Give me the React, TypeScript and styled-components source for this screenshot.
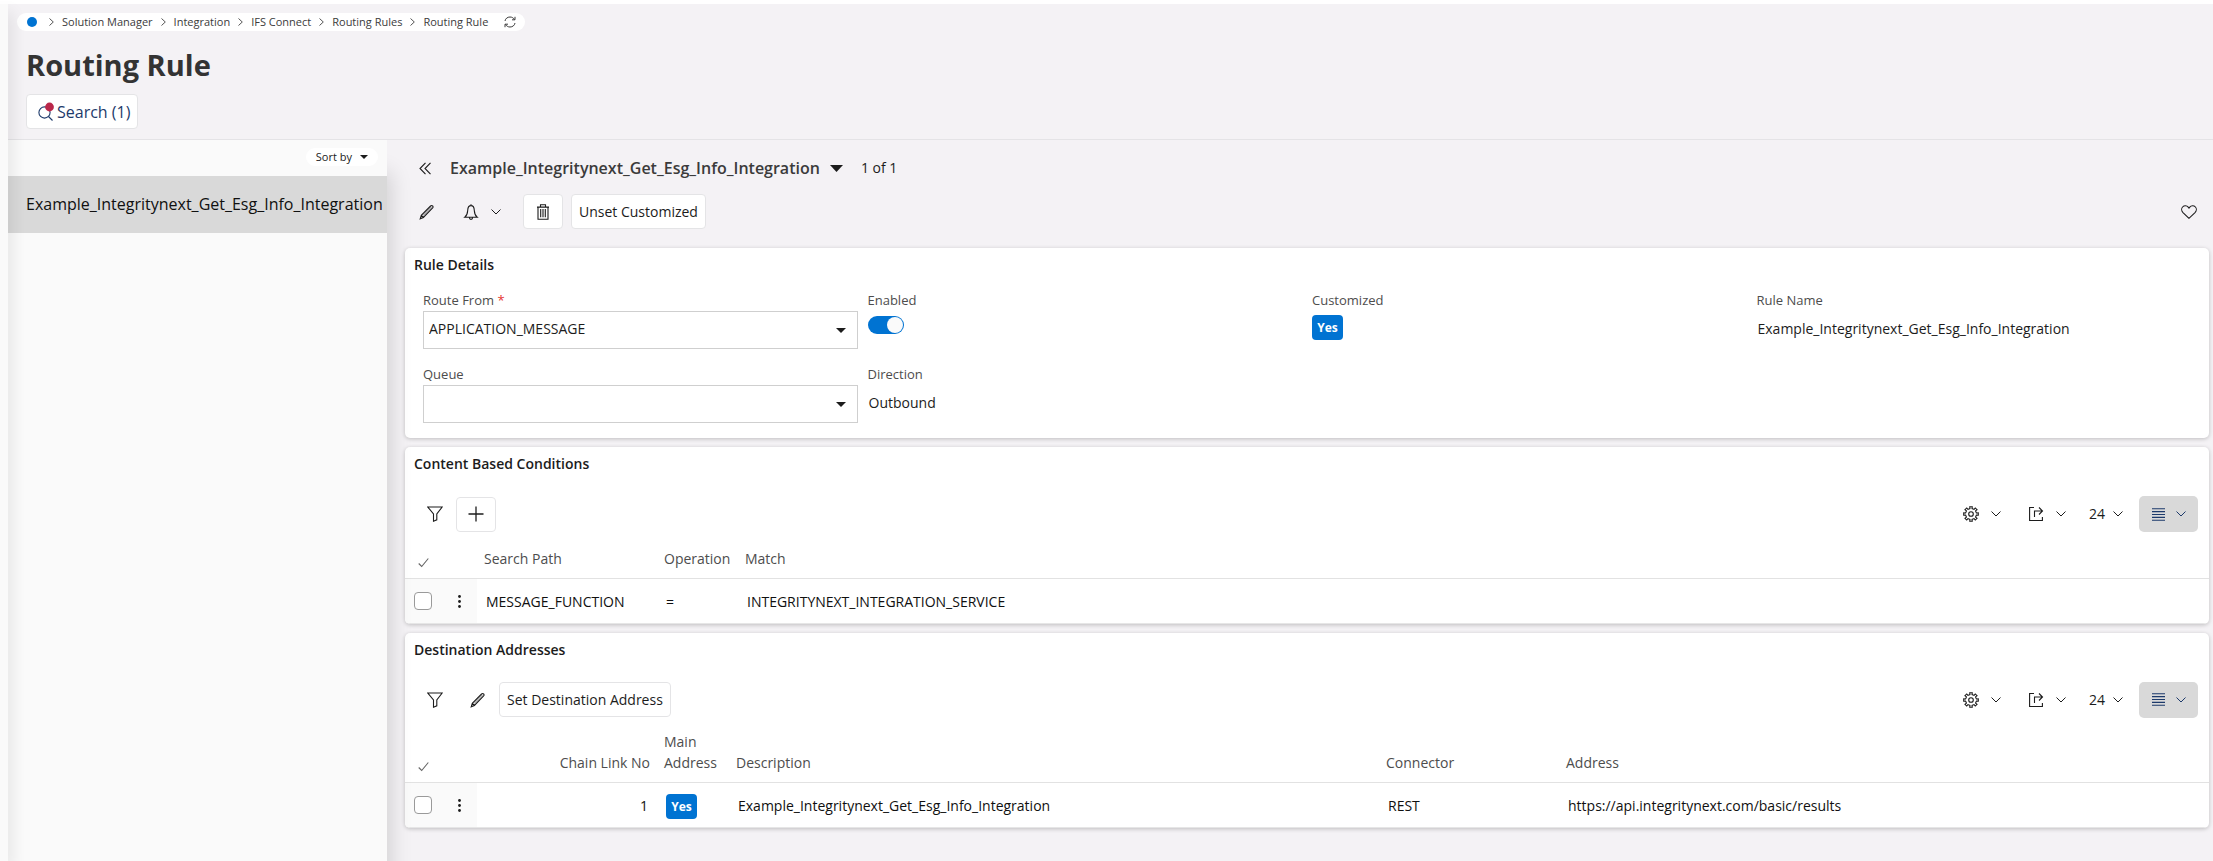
import React from "react";
import styled, { createGlobalStyle, css } from "styled-components";

const GlobalStyle = createGlobalStyle`
  *, *::before, *::after { box-sizing: border-box; }
  body {
    margin: 0;
    background: #ffffff;
    color: #1c1c1c;
    font-family: "Open Sans", "Noto Sans", sans-serif;
    font-size: 14px;
    line-height: 20px;
  }
  h1, h2, h3, p { margin: 0; }
  button, select, input { font: inherit; color: inherit; }
  button { cursor: pointer; }
  svg { display: block; flex: none; }
`;

/* ---------- shell ---------- */

const Shell = styled.div`
  display: flex;
  min-height: 100vh;
  padding-top: 4px;
`;

const Rail = styled.div`
  position: relative;
  z-index: 2;
  flex: none;
  width: 8px;
  background: #fafafa;
  box-shadow: 2px 8px 16px rgba(0, 0, 0, 0.14);
`;

const Main = styled.main`
  flex: 1;
  min-width: 0;
  display: flex;
  flex-direction: column;
  background: #f4f2f5;
`;

const PageHeader = styled.header`
  display: flex;
  flex-direction: column;
  align-items: flex-start;
  padding: 9px 9px 10px;
  border-bottom: 1px solid #e4e3e6;
`;

const Breadcrumbs = styled.nav`
  display: flex;
  align-items: center;
  height: 18px;
  padding: 0 9px 0 10px;
  border-radius: 9px;
  background: #ffffff;
  color: #3b3b3b;
  font-size: 11px;
  line-height: 18px;
`;

const HomeDot = styled.a`
  width: 10px;
  height: 10px;
  margin-right: 12px;
  border-radius: 50%;
  background: #0073d2;
`;

const Crumb = styled.a`
  margin: 0 8px;
  color: inherit;
  text-decoration: none;
`;

const BareButton = styled.button`
  display: flex;
  align-items: center;
  gap: 12px;
  padding: 0;
  border: 0;
  background: none;
`;

const RefreshButton = styled(BareButton)`
  margin-left: 8px;
`;

const PageTitle = styled.h1`
  margin: 14px 9px 9px;
  color: #333333;
  font-size: 29px;
  line-height: 40px;
  font-weight: 700;
`;

const Button = styled.button<{ $square?: boolean }>`
  display: flex;
  align-items: center;
  justify-content: center;
  height: 35px;
  padding: 0 7px;
  border: 1px solid #e4e4e6;
  border-radius: 4px;
  background: #ffffff;
  white-space: nowrap;
  ${(p) => p.$square && css`width: 40px; padding: 0;`}
`;

const SearchButton = styled(Button)`
  gap: 2px;
  margin-left: 9px;
  padding: 0 7px 0 11px;
  color: #1d3a6b;
  font-size: 16px;
`;

const Body = styled.div`
  flex: 1;
  display: flex;
`;

/* ---------- record list ---------- */

const ListPanel = styled.aside`
  position: relative;
  z-index: 1;
  flex: none;
  display: flex;
  flex-direction: column;
  width: 379px;
  background: #fafafa;
  clip-path: inset(0 -32px 0 0);
  box-shadow: 4px 32px 20px rgba(0, 0, 0, 0.14);
`;

const SortButton = styled.button`
  display: flex;
  align-items: center;
  gap: 8px;
  align-self: flex-end;
  height: 18px;
  margin: 8px 9px 10px;
  padding: 0 10px;
  border: 0;
  border-radius: 9px;
  background: #ffffff;
  font-size: 11px;
  line-height: 18px;
`;

const RecordLink = styled.a`
  padding: 16px 0 17px 18px;
  background: #d9d9d9;
  color: #101010;
  font-size: 16px;
  line-height: 24px;
  text-decoration: none;
  white-space: nowrap;
`;

/* ---------- record detail ---------- */

const Detail = styled.section`
  flex: 1;
  min-width: 0;
  display: flex;
  flex-direction: column;
  padding: 16px 4px 16px 18px;
`;

const RecordBar = styled.div`
  display: flex;
  align-items: center;
  gap: 10px;
  height: 24px;
  padding-left: 14px;
`;

const RecordTitle = styled.h2`
  margin-left: 8px;
  color: #3b3b3b;
  font-size: 16px;
  line-height: 24px;
  font-weight: 600;
`;

const RecordCount = styled.span`
  margin-left: 8px;
`;

const CommandBar = styled.div`
  display: flex;
  align-items: center;
  gap: 8px;
  margin: 14px 0 19px;
  padding: 0 12px 0 14px;
`;

const CommandGroup = styled.div`
  display: flex;
  align-items: center;
  gap: 28px;
  margin-right: 14px;
`;

const Spacer = styled.div`
  flex: 1;
`;

const Card = styled.section`
  margin-bottom: 9px;
  border-radius: 5px;
  background: #ffffff;
  box-shadow: 0 1px 4px rgba(0, 0, 0, 0.22);
  overflow: hidden;
`;

const CardTitle = styled.h3`
  padding: 7px 9px;
  color: #1c1c1c;
  font-size: 14px;
  line-height: 20px;
  font-weight: 600;
`;

const FormGrid = styled.div`
  display: grid;
  grid-template-columns: repeat(4, 1fr);
  column-gap: 10px;
  padding: 8px 18px 15px;
`;

const Field = styled.div`
  display: flex;
  flex-direction: column;
  align-items: flex-start;
  height: 74px;
  &:nth-child(n + 5) { height: 59px; }
`;

const Label = styled.label`
  margin-bottom: 1px;
  color: #4d4d4d;
  font-size: 13px;
  line-height: 20px;
`;

const Required = styled.span`
  color: #e5342f;
`;

const Value = styled.output`
  padding: 8px 1px;
`;

const SelectBox = styled.div`
  display: grid;
  align-items: center;
  width: 100%;
  & > * { grid-area: 1 / 1; }
  & > svg { justify-self: end; margin-right: 12px; pointer-events: none; }
`;

const Select = styled.select`
  appearance: none;
  width: 100%;
  height: 38px;
  padding: 0 32px 2px 5px;
  border: 1px solid #cfcfcf;
  border-radius: 0;
  background: #ffffff;
`;

const Toggle = styled.input`
  appearance: none;
  display: flex;
  justify-content: flex-end;
  width: 36px;
  height: 18px;
  margin: 5px 0 0;
  padding: 1px;
  border-radius: 9px;
  background: #0073d2;
  &::before {
    content: "";
    width: 16px;
    height: 16px;
    border-radius: 50%;
    background: #fafafa;
  }
`;

const Badge = styled.span`
  display: inline-block;
  width: 31px;
  border-radius: 4px;
  background: #0073d2;
  color: #ffffff;
  font-size: 12px;
  line-height: 25px;
  font-weight: 700;
  text-align: center;
  vertical-align: middle;
`;

const BadgeSlot = styled.div`
  padding-top: 4px;
`;

/* ---------- tables ---------- */

const TableBar = styled.div`
  display: flex;
  align-items: center;
  padding: 15px 11px 0 8px;
`;

const ToolButton = styled.button<{ $active?: boolean; $wide?: boolean }>`
  display: flex;
  align-items: center;
  justify-content: center;
  gap: 12px;
  width: ${(p) => (p.$wide ? "65px" : "43px")};
  height: 36px;
  padding: 0;
  border: 0;
  border-radius: 5px;
  background: none;
  ${(p) => p.$active && css`width: 59px; margin-left: 6px; background: #d9d9d9; color: #1d3a6b; gap: 11px;`}
`;

const PageSize = styled(ToolButton)`
  gap: 8px;
  width: 54px;
`;

const Table = styled.table`
  width: 100%;
  table-layout: fixed;
  border-collapse: collapse;
`;

const Th = styled.th<{ $right?: boolean }>`
  height: 46px;
  padding: 13px 7px 9px;
  border-bottom: 1px solid #e2e2e2;
  color: #4d4d4d;
  font-weight: 400;
  line-height: 21px;
  vertical-align: bottom;
  text-align: ${(p) => (p.$right ? "right" : "left")};
`;

const CheckTh = styled(Th)`
  padding: 0 0 10px 13px;
`;

const Td = styled.td<{ $right?: boolean }>`
  height: 45px;
  padding: 3px 9px 0 ${(p) => (p.$right ? "0" : "9px")};
  border-bottom: 1px solid #e6e6e6;
  color: #101010;
  text-align: ${(p) => (p.$right ? "right" : "left")};
`;

const ToolTd = styled(Td)`
  padding: 1px 0 0 9px;
  background: #fafafa;
`;

const MenuTd = styled(ToolTd)`
  padding: 1px 0 0 4px;
`;

const Checkbox = styled.input`
  appearance: none;
  display: block;
  width: 18px;
  height: 18px;
  margin: 0;
  border: 1px solid #9a9a9a;
  border-radius: 4px;
  background: #ffffff;
`;

/* ---------- icons ---------- */

type IconProps = { size?: number; box?: string; children: React.ReactNode };
const Icon = ({ size = 16, box = "0 0 16 16", children }: IconProps) => (
  <svg width={size} height={size} viewBox={box} fill="none" stroke="currentColor" strokeWidth="1.1" aria-hidden="true">
    {children}
  </svg>
);

const ChevronDown = () => (
  <svg width="10" height="6" viewBox="0 0 10 6" fill="none" stroke="currentColor" strokeWidth="1" aria-hidden="true">
    <path d="M.5.5 5 5 9.500.5" />
  </svg>
);
const Separator = () => (
  <svg width="5" height="8" viewBox="0 0 5 8" fill="none" stroke="#555" strokeWidth="1" aria-hidden="true">
    <path d="M.5.5 4.300 4 .5 7.500" />
  </svg>
);
const Caret = ({ width = 10, height = 5 }: { width?: number; height?: number }) => (
  <svg width={width} height={height} viewBox="0 0 10 5" preserveAspectRatio="none" fill="currentColor" aria-hidden="true">
    <path d="M0 0H10L5 5Z" />
  </svg>
);
const Refresh = () => (
  <Icon size={12} box="0 0 12 12">
    <path d="M1 5C1.400 2.500 3.500 1 6 1c2 0 3.600 1 4.500 2.600M11 .8v3H8M11 7c-.4 2.500-2.500 4-5 4-2 0-3.600-1-4.500-2.600M1 11.200v-3h3" strokeWidth="1" />
  </Icon>
);
const SearchIcon = () => (
  <svg width="17" height="20" viewBox="0 0 17 20" fill="none" stroke="currentColor" strokeWidth="1.100" aria-hidden="true">
    <circle cx="6.500" cy="10.500" r="5.600" />
    <path d="m10.500 14.500 4 4" />
    <circle cx="11.500" cy="5" r="4.400" fill="#ba274a" stroke="none" />
  </svg>
);
const DoubleLeft = () => (
  <Icon size={13} box="0 0 13 13">
    <path d="M6.500.8 1 6.500l5.500 5.700M11.500.8 6 6.500l5.500 5.700" />
  </Icon>
);
const Pencil = () => (
  <Icon>
    <path d="M1.200 14.800 2.300 11.400 11.600 2c.7-.7 1.500-.7 2 0 .6.500.6 1.200 0 1.900L4.400 13.500ZM2.300 11.400l2.100 2.100" />
    <path d="m12.600 2.800-8.500 8.700" strokeWidth=".6" />
  </Icon>
);
const Bell = () => (
  <Icon>
    <path d="M8 .3v1.300M1.800 13.300c1.900-1.500 2.700-3.400 2.900-6.800C4.800 3.300 6.200 1.600 8 1.600s3.200 1.700 3.300 4.900c.2 3.400 1 5.300 2.900 6.800ZM6.400 13.500c0 1.200.7 1.900 1.600 1.900s1.600-.7 1.600-1.900" />
  </Icon>
);
const Trash = () => (
  <Icon>
    <path d="M2 3.100h12M5.500 3V.8h5V3M3 3v12.300h10V3M5.700 5v8.300M8 5v8.300M10.300 5v8.300" />
  </Icon>
);
const Heart = () => (
  <Icon>
    <path d="M8 14.300 2 8.600C.4 7 .3 4.400 1.600 3c1.600-1.800 4.300-1.600 5.600.1l.8 1 .8-1c1.300-1.700 4-1.900 5.600-.1 1.300 1.400 1.200 4-.4 5.600Z" />
  </Icon>
);
const Filter = () => (
  <Icon>
    <path d="M.8 1h14.400L9.800 8v5.800L6.500 15.200V8Z" />
  </Icon>
);
const Plus = () => (
  <Icon>
    <path d="M8 .5v15M.5 8h15" strokeWidth="1.300" />
  </Icon>
);
const teeth = Array.from({ length: 16 }, (_, i) => {
  const a = (i / 16) * Math.PI * 2;
  const r = i % 2 ? 5.5 : 7.4;
  const w = i % 2 ? 0.2 : 0.17;
  const at = (t: number) => `${(8 + r * Math.cos(t)).toFixed(2)} ${(8 + r * Math.sin(t)).toFixed(2)}`;
  return `${at(a - w)}L${at(a + w)}`;
});
const Gear = () => (
  <Icon>
    <path d={`M${teeth.join("L")}Z`} />
    <circle cx="8" cy="8" r="2.300" />
  </Icon>
);
const Export = () => (
  <Icon>
    <path d="M6 1.500H1.600v13h12.800V11M6.500 11V5H14M11 1.500 14.500 5 11 8.500" />
  </Icon>
);
const Lines = () => (
  <Icon size={13} box="0 0 13 13">
    <path d="M0 .7h13M0 3.600h13M0 6.500h13M0 9.400h13M0 12.300h13" />
  </Icon>
);
const CheckMark = () => (
  <Icon size={11} box="0 0 11 11">
    <path d="m.7 6.500 3 3L10.300 1.500" stroke="#666" />
  </Icon>
);
const Dots = () => (
  <svg width="3" height="13" viewBox="0 0 3 13" fill="#1c1c1c" aria-hidden="true">
    <circle cx="1.500" cy="1.500" r="1.400" />
    <circle cx="1.500" cy="6.500" r="1.400" />
    <circle cx="1.500" cy="11.500" r="1.400" />
  </svg>
);

/* ---------- parts ---------- */

const RECORD = "Example_Integritynext_Get_Esg_Info_Integration";
const TRAIL = ["Solution Manager", "Integration", "IFS Connect", "Routing Rules", "Routing Rule"];

const TableTools = () => (
  <>
    <Spacer />
    <ToolButton $wide type="button" aria-label="Settings"><Gear /><ChevronDown /></ToolButton>
    <ToolButton $wide type="button" aria-label="Export"><Export /><ChevronDown /></ToolButton>
    <PageSize type="button" aria-label="Rows per page: 24">24<ChevronDown /></PageSize>
    <ToolButton $active type="button" aria-label="View"><Lines /><ChevronDown /></ToolButton>
  </>
);

type Column = { title: React.ReactNode; width?: number; right?: boolean };

const DataTable = ({ columns, row }: { columns: Column[]; row: React.ReactNode[] }) => (
  <Table>
    <colgroup>
      <col width={49} />
      <col width={23} />
      {columns.map((c, i) => <col key={i} width={c.width} />)}
    </colgroup>
    <thead>
      <tr>
        <CheckTh aria-label="Select"><CheckMark /></CheckTh>
        <Th aria-label="Row menu" />
        {columns.map((c, i) => <Th key={i} scope="col" $right={c.right}>{c.title}</Th>)}
      </tr>
    </thead>
    <tbody>
      <tr>
        <ToolTd><Checkbox type="checkbox" aria-label="Select row" /></ToolTd>
        <MenuTd><BareButton type="button" aria-label="Row menu"><Dots /></BareButton></MenuTd>
        {row.map((cell, i) => <Td key={i} $right={columns[i].right}>{cell}</Td>)}
      </tr>
    </tbody>
  </Table>
);

export default function App() {
  return (
    <>
      <GlobalStyle />
      <Shell>
        <Rail />
        <Main>
          <PageHeader>
            <Breadcrumbs aria-label="Breadcrumb">
              <HomeDot href="#home" aria-label="Home" />
              {TRAIL.map((name) => (
                <React.Fragment key={name}>
                  <Separator />
                  <Crumb href="#trail">{name}</Crumb>
                </React.Fragment>
              ))}
              <RefreshButton type="button" aria-label="Refresh"><Refresh /></RefreshButton>
            </Breadcrumbs>
            <PageTitle>Routing Rule</PageTitle>
            <SearchButton type="button"><SearchIcon />Search (1)</SearchButton>
          </PageHeader>
          <Body>
            <ListPanel>
              <SortButton type="button">Sort by<Caret width={8} height={4} /></SortButton>
              <RecordLink href="#record">{RECORD}</RecordLink>
            </ListPanel>
            <Detail>
              <RecordBar>
                <BareButton type="button" aria-label="Hide list"><DoubleLeft /></BareButton>
                <RecordTitle>{RECORD}</RecordTitle>
                <BareButton type="button" aria-label="Choose record"><Caret width={13} height={7} /></BareButton>
                <RecordCount>1 of 1</RecordCount>
              </RecordBar>
              <CommandBar>
                <CommandGroup>
                  <BareButton type="button" aria-label="Edit"><Pencil /></BareButton>
                  <BareButton type="button" aria-label="Notifications"><Bell /><ChevronDown /></BareButton>
                </CommandGroup>
                <Button $square type="button" aria-label="Delete"><Trash /></Button>
                <Button type="button">Unset Customized</Button>
                <Spacer />
                <BareButton type="button" aria-label="Favorite"><Heart /></BareButton>
              </CommandBar>

              <Card>
                <CardTitle>Rule Details</CardTitle>
                <FormGrid>
                  <Field>
                    <Label htmlFor="route">Route From <Required>*</Required></Label>
                    <SelectBox>
                      <Select id="route" required defaultValue="APPLICATION_MESSAGE">
                        <option>APPLICATION_MESSAGE</option>
                      </Select>
                      <Caret />
                    </SelectBox>
                  </Field>
                  <Field>
                    <Label htmlFor="enabled">Enabled</Label>
                    <Toggle id="enabled" type="checkbox" role="switch" defaultChecked />
                  </Field>
                  <Field>
                    <Label as="span">Customized</Label>
                    <BadgeSlot><Badge>Yes</Badge></BadgeSlot>
                  </Field>
                  <Field>
                    <Label htmlFor="rule-name">Rule Name</Label>
                    <Value id="rule-name">{RECORD}</Value>
                  </Field>
                  <Field>
                    <Label htmlFor="queue">Queue</Label>
                    <SelectBox>
                      <Select id="queue" defaultValue=""><option value="" /></Select>
                      <Caret />
                    </SelectBox>
                  </Field>
                  <Field>
                    <Label htmlFor="direction">Direction</Label>
                    <Value id="direction">Outbound</Value>
                  </Field>
                </FormGrid>
              </Card>

              <Card>
                <CardTitle>Content Based Conditions</CardTitle>
                <TableBar>
                  <ToolButton type="button" aria-label="Filter"><Filter /></ToolButton>
                  <Button $square type="button" aria-label="Add"><Plus /></Button>
                  <TableTools />
                </TableBar>
                <DataTable
                  columns={[{ title: "Search Path", width: 180 }, { title: "Operation", width: 81 }, { title: "Match" }]}
                  row={["MESSAGE_FUNCTION", "=", "INTEGRITYNEXT_INTEGRATION_SERVICE"]}
                />
              </Card>

              <Card>
                <CardTitle>Destination Addresses</CardTitle>
                <TableBar>
                  <ToolButton type="button" aria-label="Filter"><Filter /></ToolButton>
                  <ToolButton type="button" aria-label="Edit"><Pencil /></ToolButton>
                  <Button type="button">Set Destination Address</Button>
                  <TableTools />
                </TableBar>
                <DataTable
                  columns={[
                    { title: "Chain Link No", width: 180, right: true },
                    { title: "Main Address", width: 72 },
                    { title: "Description", width: 650 },
                    { title: "Connector", width: 180 },
                    { title: "Address" },
                  ]}
                  row={["1", <Badge key="main">Yes</Badge>, RECORD, "REST", "https://api.integritynext.com/basic/results"]}
                />
              </Card>
            </Detail>
          </Body>
        </Main>
      </Shell>
    </>
  );
}
